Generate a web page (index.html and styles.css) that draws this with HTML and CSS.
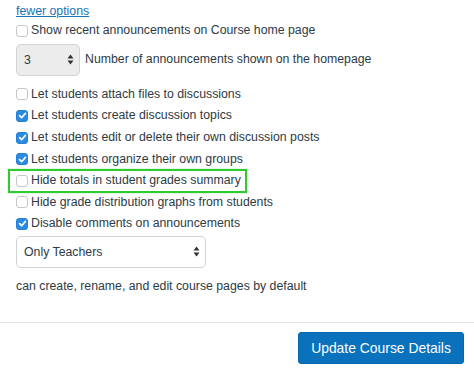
FILE: index.html
```html
<!DOCTYPE html>
<html>
<head>
<meta charset="utf-8">
<link rel="stylesheet" href="styles.css">
</head>
<body>
<div class="panel">
  <a class="link" href="#">fewer options</a>
  <label class="row first"><span class="cb"></span>Show recent announcements on Course home page</label>
  <div class="numrow">
    <div class="select small"><span>3</span><span class="arrows"><svg width="7" height="11" viewBox="0 0 7 11"><path d="M3.5 0.5 L6.5 4.5 L0.5 4.5 Z M0.5 6.5 L6.5 6.5 L3.5 10.5 Z" fill="#333"/></svg></span></div>
    <span class="numlabel">Number of announcements shown on the homepage</span>
  </div>
  <label class="row"><span class="cb"></span>Let students attach files to discussions</label>
  <label class="row"><span class="cb on"><svg width="11" height="11" viewBox="0 0 11 11"><path d="M2.6 5.7 L4.6 7.7 L8.4 3.4" fill="none" stroke="#fff" stroke-width="1.7" stroke-linecap="round" stroke-linejoin="round"/></svg></span>Let students create discussion topics</label>
  <label class="row"><span class="cb on"><svg width="11" height="11" viewBox="0 0 11 11"><path d="M2.6 5.7 L4.6 7.7 L8.4 3.4" fill="none" stroke="#fff" stroke-width="1.7" stroke-linecap="round" stroke-linejoin="round"/></svg></span>Let students edit or delete their own discussion posts</label>
  <label class="row"><span class="cb on"><svg width="11" height="11" viewBox="0 0 11 11"><path d="M2.6 5.7 L4.6 7.7 L8.4 3.4" fill="none" stroke="#fff" stroke-width="1.7" stroke-linecap="round" stroke-linejoin="round"/></svg></span>Let students organize their own groups</label>
  <label class="row hl"><span class="cb"></span>Hide totals in student grades summary</label>
  <label class="row"><span class="cb"></span>Hide grade distribution graphs from students</label>
  <label class="row"><span class="cb on"><svg width="11" height="11" viewBox="0 0 11 11"><path d="M2.6 5.7 L4.6 7.7 L8.4 3.4" fill="none" stroke="#fff" stroke-width="1.7" stroke-linecap="round" stroke-linejoin="round"/></svg></span>Disable comments on announcements</label>
  <div class="select wide"><span>Only Teachers</span><span class="arrows"><svg width="7" height="11" viewBox="0 0 7 11"><path d="M3.5 0.5 L6.5 4.5 L0.5 4.5 Z M0.5 6.5 L6.5 6.5 L3.5 10.5 Z" fill="#333"/></svg></span></div>
  <p class="note">can create, rename, and edit course pages by default</p>
</div>
<div class="footer">
  <button class="btn" type="button">Update Course Details</button>
</div>
</body>
</html>
```

FILE: styles.css
```css
html, body {
  margin: 0;
  padding: 0;
  background: #fff;
}
body {
  font-family: "Liberation Sans", Arial, sans-serif;
  font-size: 12.3px;
  color: #2d3b45;
  width: 474px;
  height: 373px;
  overflow: hidden;
}
.panel {
  padding: 3px 0 0 16px;
  display: flex;
  flex-direction: column;
  align-items: flex-start;
}
.link {
  color: #1a73b8;
  text-decoration: underline;
  line-height: 17px;
}
.row {
  display: flex;
  align-items: center;
  height: 21.6px;
  line-height: 17px;
  position: relative;
}
.row.first {
  margin-top: 0;
}
.cb {
  width: 10px;
  height: 10px;
  border: 1px solid #c2c8cc;
  border-radius: 3px;
  background: #fff;
  margin-right: 3px;
  display: flex;
  align-items: center;
  justify-content: center;
  flex: none;
  box-sizing: content-box;
}
.cb svg {
  display: block;
  flex: none;
}
.cb.on {
  background: #2b8be0;
  border-color: #2681d4;
}
.hl::before {
  content: "";
  position: absolute;
  left: -8px;
  right: -6px;
  top: -1px;
  bottom: -1px;
  border: 2px solid #2ecc2e;
  box-shadow: 0 0 1px #5bd35b;
}
.numrow {
  display: flex;
  align-items: center;
  margin-top: 2px;
  margin-bottom: 8px;
}
.select {
  display: flex;
  align-items: center;
  justify-content: space-between;
  box-sizing: border-box;
  height: 32px;
  border: 1px solid #cfd4d8;
  border-radius: 5px;
  padding: 0 5px 0 7px;
}
.select .arrows svg {
  display: block;
}
.small {
  width: 64px;
  background: #ececec;
  margin-right: 5px;
}
.wide {
  width: 190px;
  background: #fff;
  margin-top: 1px;
}
.numlabel {
  line-height: 17px;
}
.note {
  margin: 10px 0 0 0;
  line-height: 17px;
}
.footer {
  margin-top: 27px;
  border-top: 1px solid #e3e6e8;
  display: flex;
  justify-content: flex-end;
  padding: 9px 10px 0 0;
}
.btn {
  font-family: "Liberation Sans", Arial, sans-serif;
  font-size: 13.9px;
  color: #fff;
  background: #0a72bd;
  border: 1px solid #0866aa;
  border-radius: 3px;
  width: 166px;
  height: 32px;
  padding: 0;
}
```
